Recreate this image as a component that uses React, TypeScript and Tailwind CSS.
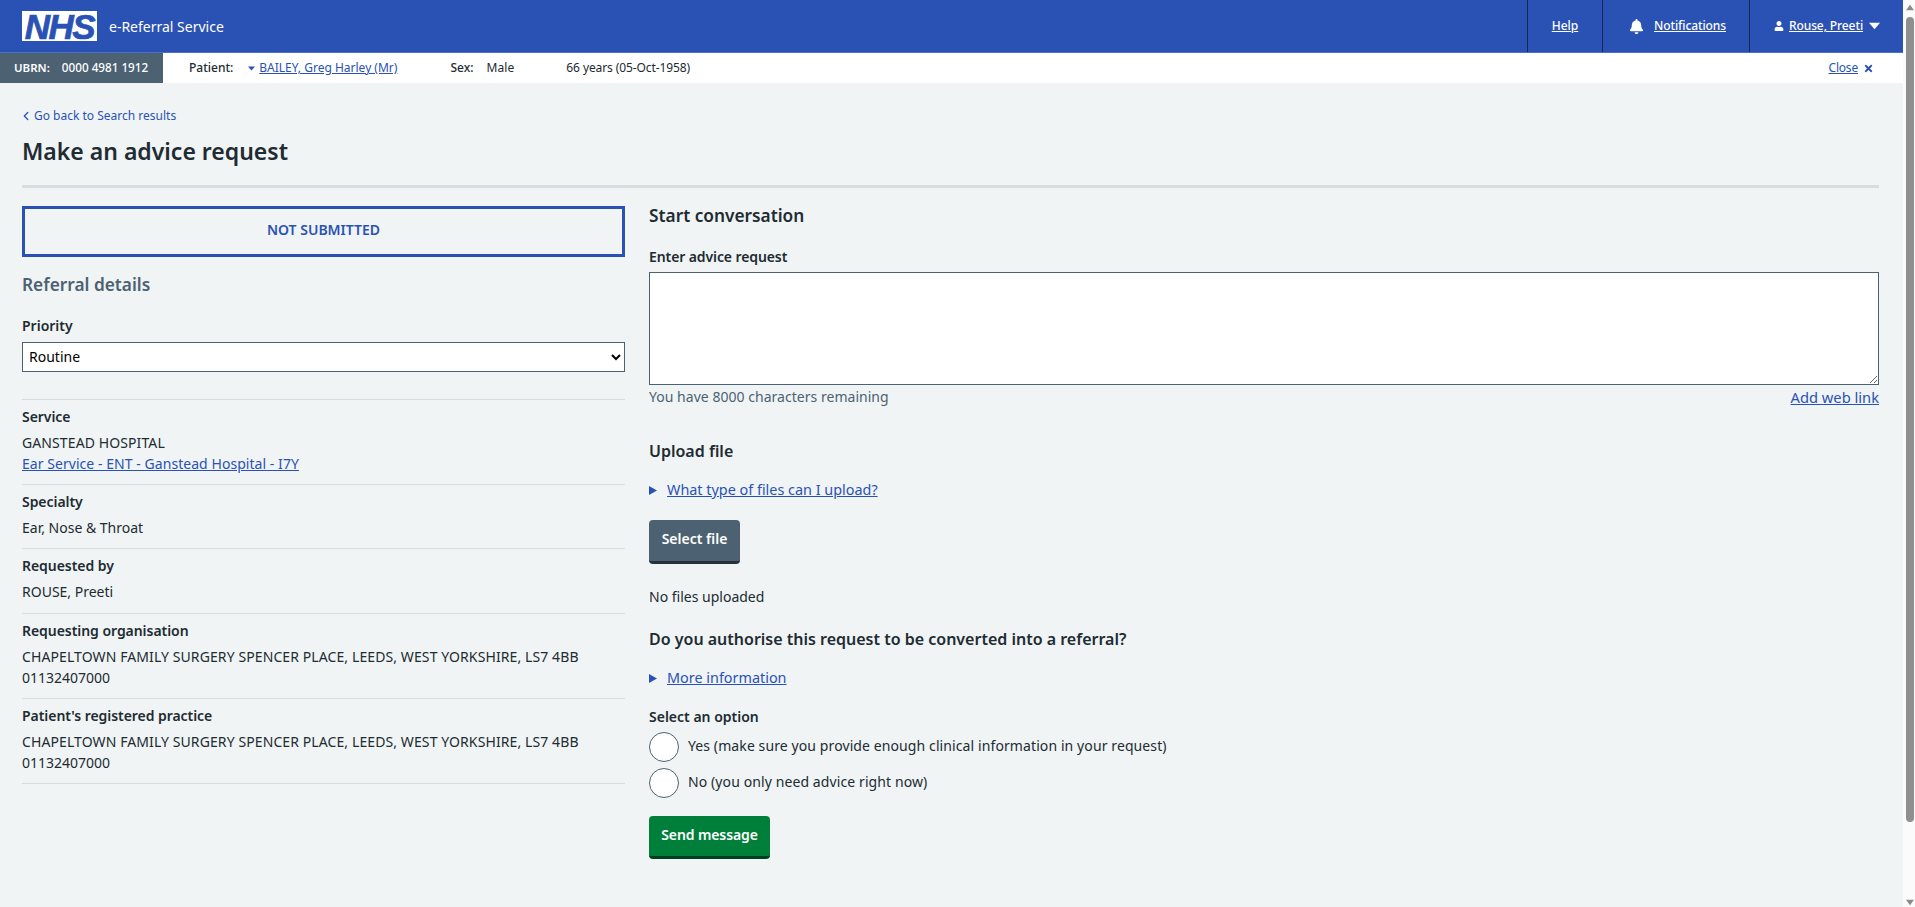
import React from "react";
import { FaBell, FaUser, FaTimes } from "react-icons/fa";
import { ChevronLeft } from "lucide-react";

const Tri = ({ cls, dir = "down" }: { cls: string; dir?: "down" | "up" | "right" }) => (
  <svg viewBox="0 0 10 10" className={cls} fill="currentColor" preserveAspectRatio="none">
    {dir === "down" && <polygon points="0,1 10,1 5,9" />}
    {dir === "up" && <polygon points="0,9 10,9 5,1" />}
    {dir === "right" && <polygon points="0,0 10,5 0,10" />}
  </svg>
);

const Detail = ({ label, cls = "pb-[10px]", children }: { label: string; cls?: string; children: React.ReactNode }) => (
  <div className={`border-b border-[#d8dde0] pt-[7px] ${cls}`}>
    <div className="text-[14px] leading-[20px] font-semibold tracking-[-0.05px] text-[#212b32]">{label}</div>
    <div className="mt-[5px] text-[14px] leading-[21px] text-[#212b32]">{children}</div>
  </div>
);

const Lnk = ({ children, cls = "" }: { children: React.ReactNode; cls?: string }) => (
  <a href="#" className={`text-[#2a52b5] underline ${cls}`}>{children}</a>
);

const Disclosure = ({ text, cls }: { text: string; cls: string }) => (
  <div className={`flex items-center h-[20px] text-[14.4px] leading-[20px] ${cls}`}>
    <Tri dir="right" cls="w-[8px] h-[9px] text-[#2a52b5] mr-[10px]" />
    <Lnk>{text}</Lnk>
  </div>
);

const Radio = ({ label, cls }: { label: string; cls: string }) => (
  <label className={`flex items-center h-[30px] ${cls}`}>
    <input type="radio" name="convert" className="appearance-none w-[30px] h-[30px] rounded-full border border-[#4c6272] bg-white" />
    <span className="ml-[9px] mb-[3px] text-[14px] tracking-[0.1px] text-[#212b32]">{label}</span>
  </label>
);

export default function App() {
  return (
    <div className="flex h-[907px] overflow-hidden bg-[#f0f4f5] text-[#212b32] font-['Noto_Sans','Open_Sans',sans-serif]">
      <div className="flex-1 min-w-0">
        <header className="flex items-stretch h-[53px] bg-[#2a52b5] border-b border-[#4a6fc2] text-white">
          <div className="flex items-center pl-[22px] flex-1">
            <div className="flex items-center justify-center w-[75px] h-[30px] bg-white text-[#2a52b5] italic font-bold text-[35px] leading-none tracking-[-1.5px] [-webkit-text-stroke:0.7px_#2a52b5] font-['Liberation_Sans',sans-serif]">
              NHS
            </div>
            <span className="ml-[12px] text-[14px]">e-Referral Service</span>
          </div>
          <div className="flex items-center justify-center w-[75px] border-l border-[#16264f] text-[12px]">
            <a href="#" className="underline font-medium">Help</a>
          </div>
          <div className="flex items-center w-[147px] border-l border-[#16264f] pl-[26px] text-[12px]">
            <FaBell className="w-[15px] h-[15px]" />
            <a href="#" className="ml-[10px] underline font-medium tracking-[-0.1px]">Notifications</a>
          </div>
          <div className="flex items-center w-[154px] border-l border-[#16264f] pl-[24px] text-[12px]">
            <FaUser className="w-[10px] h-[10px]" />
            <a href="#" className="ml-[5px] underline font-medium tracking-[-0.1px] whitespace-nowrap">Rouse, Preeti</a>
            <Tri cls="ml-[6px] w-[11px] h-[8px]" />
          </div>
        </header>

        <div className="flex items-center h-[30px] bg-white text-[12px]">
          <div className="flex items-center w-[163px] h-full bg-[#4c6272] text-white pl-[14px]">
            <span className="font-semibold text-[11.5px]">UBRN:</span>
            <span className="ml-[12px] font-medium text-[11.7px]">0000 4981 1912</span>
          </div>
          <span className="ml-[26px] font-medium">Patient:</span>
          <Tri cls="ml-[15px] w-[7px] h-[5px] text-[#2a52b5]" />
          <Lnk cls="ml-[4px]">BAILEY, Greg Harley (Mr)</Lnk>
          <span className="ml-[53px] font-medium">Sex:</span>
          <span className="ml-[13px] tracking-[0.1px]">Male</span>
          <span className="ml-[52px] tracking-[-0.1px]">66 years (05-Oct-1958)</span>
          <span className="flex items-center ml-auto mr-[29px]">
            <Lnk cls="tracking-[-0.2px]">Close</Lnk>
            <FaTimes className="ml-[5px] w-[11px] h-[11px] text-[#2a52b5]" />
          </span>
        </div>

        <main className="pl-[22px] pr-[24px] pt-[23px]">
          <a href="#" className="flex items-center h-[20px] text-[12px] text-[#2a52b5]">
            <ChevronLeft className="w-[14px] h-[14px] -ml-[3px] mr-[1px]" strokeWidth={2.25} />
            Go back to Search results
          </a>
          <h1 className="mt-[9px] text-[23px] leading-[32px] font-semibold">Make an advice request</h1>
          <div className="mt-[18px] h-[3px] bg-[#d8dde0]" />

          <div className="flex gap-[24px]">
            <aside className="w-[603px] shrink-0">
              <div className="mt-[18px] flex items-center justify-center h-[51px] pb-[4px] border-[3px] border-[#2a52b5] text-[14px] font-semibold text-[#2a52b5]">
                NOT SUBMITTED
              </div>
              <h2 className="mt-[15px] text-[17.3px] leading-[26px] font-semibold text-[#4c6272]">Referral details</h2>
              <div className="mt-[18px] text-[14px] leading-[20px] font-semibold">Priority</div>
              <select className="mt-[6px] w-full h-[30px] pb-[2px] bg-white border border-[#4c6272] pl-[2px] text-[14px] text-black">
                <option>Routine</option>
              </select>
              <div className="mt-[27px] border-t border-[#d8dde0]">
                <Detail label="Service">
                  <div className="tracking-[0.1px]">GANSTEAD HOSPITAL</div>
                  <Lnk cls="tracking-[0.05px]">Ear Service - ENT - Ganstead Hospital - I7Y</Lnk>
                </Detail>
                <Detail label="Specialty">Ear, Nose &amp; Throat</Detail>
                <Detail label="Requested by" cls="pb-[11px]">ROUSE, Preeti</Detail>
                <Detail label="Requesting organisation">
                  <div className="tracking-[0.1px]">CHAPELTOWN FAMILY SURGERY SPENCER PLACE, LEEDS, WEST YORKSHIRE, LS7 4BB</div>
                  <div>01132407000</div>
                </Detail>
                <Detail label="Patient's registered practice">
                  <div className="tracking-[0.1px]">CHAPELTOWN FAMILY SURGERY SPENCER PLACE, LEEDS, WEST YORKSHIRE, LS7 4BB</div>
                  <div>01132407000</div>
                </Detail>
              </div>
            </aside>

            <section className="flex-1 min-w-0">
              <h2 className="mt-[15px] text-[17.3px] leading-[26px] font-semibold">Start conversation</h2>
              <div className="mt-[18px] text-[14px] leading-[20px] font-semibold tracking-[-0.1px]">Enter advice request</div>
              <textarea className="block mt-[5px] w-full h-[113px] bg-white border border-[#4c6272]" />
              <div className="mt-[2px] flex justify-between text-[14px] leading-[20px]">
                <span className="text-[#4c6272] tracking-[0.03px]">You have 8000 characters remaining</span>
                <Lnk cls="text-[14.7px]">Add web link</Lnk>
              </div>
              <h2 className="mt-[31px] text-[16px] leading-[26px] font-semibold">Upload file</h2>
              <Disclosure text="What type of files can I upload?" cls="mt-[16px]" />
              <button className="block mt-[20px] w-[91px] h-[44px] pb-[5px] rounded-[4px] bg-[#4c6272] border-b-[3px] border-[#263139] text-white text-[14px] font-semibold">
                Select file
              </button>
              <div className="mt-[23px] text-[14px] leading-[20px]">No files uploaded</div>
              <h2 className="mt-[19px] text-[16px] leading-[26px] font-semibold">Do you authorise this request to be converted into a referral?</h2>
              <Disclosure text="More information" cls="mt-[16px]" />
              <div className="mt-[19px] text-[14px] leading-[20px] font-semibold">Select an option</div>
              <Radio label="Yes (make sure you provide enough clinical information in your request)" cls="mt-[5px]" />
              <Radio label="No (you only need advice right now)" cls="mt-[6px]" />
              <button className="block mt-[18px] w-[121px] h-[43px] pb-[3px] rounded-[4px] bg-[#007f3b] border-b-[3px] border-[#00401e] text-white text-[14px] tracking-[-0.1px] font-semibold">
                Send message
              </button>
            </section>
          </div>
        </main>
      </div>

      <div className="flex flex-col items-end w-[12px] shrink-0 bg-[#fbfbfb] pr-[1px] text-[#8a8a8a]">
        <Tri dir="up" cls="mt-[4px] w-[8px] h-[7px] shrink-0" />
        <div className="mt-[6px] w-[8px] h-[805px] rounded-[4px] bg-[#8f8f8f]" />
        <div className="flex-1" />
        <Tri cls="mb-[1px] w-[8px] h-[7px] shrink-0" />
      </div>
    </div>
  );
}
